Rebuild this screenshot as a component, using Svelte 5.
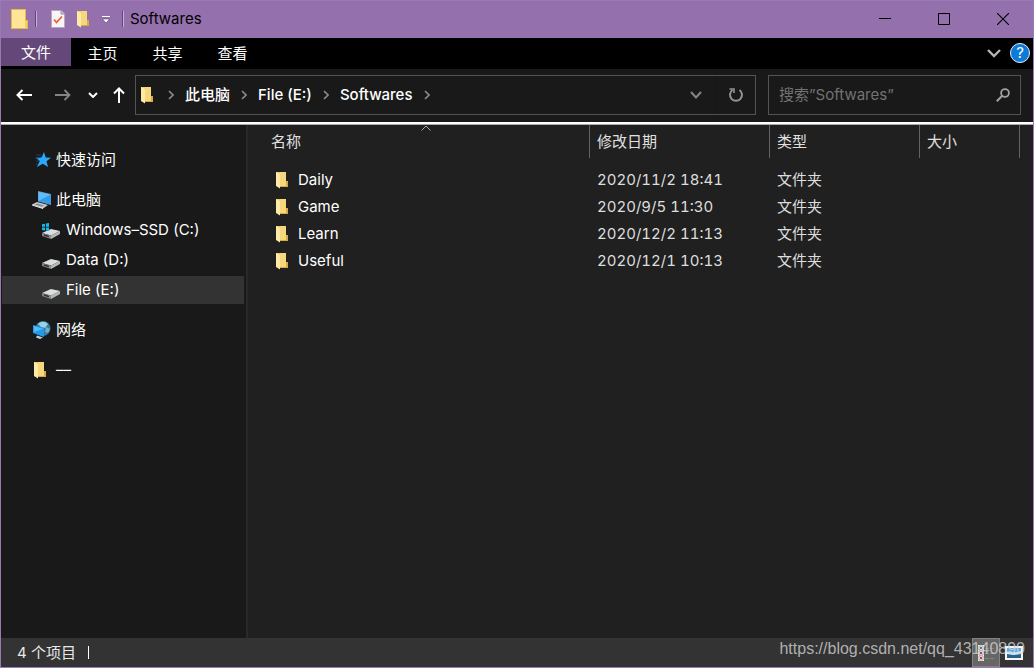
<script>
  let search = $state('');
  let selected = $state('File (E:)');

  const tabs = ['主页', '共享', '查看'];
  const crumbs = ['此电脑', 'File (E:)', 'Softwares'];

  const groups = [
    [{ name: '快速访问', icon: 'star' }],
    [
      { name: '此电脑', icon: 'computer' },
      { name: 'Windows–SSD (C:)', icon: 'system', child: true },
      { name: 'Data (D:)', icon: 'drive', child: true },
      { name: 'File (E:)', icon: 'drive', child: true }
    ],
    [{ name: '网络', icon: 'network' }],
    [{ name: '––', icon: 'folder' }]
  ];

  const files = [
    { name: 'Daily', date: '2020/11/2 18:41' },
    { name: 'Game', date: '2020/9/5 11:30' },
    { name: 'Learn', date: '2020/12/2 11:13' },
    { name: 'Useful', date: '2020/12/1 10:13' }
  ];
</script>

{#snippet folder()}
  <svg class="folder" width="12" height="18" viewBox="0 0 12 18" aria-hidden="true">
    <path d="M0 1H10V10H12V16H3L0 14Z" fill="#f0cb68" />
    <path d="M4 1H10V15H4Z" fill="#f6d77c" />
    <path d="M0 1L4 3V17.5L0 15Z" fill="#ffeaa6" />
    <path d="M10 10H12V16H4V15H10Z" fill="#d5aa4a" />
  </svg>
{/snippet}

{#snippet chevron()}
  <svg class="chevron" width="6" height="10" viewBox="0 0 6 10" aria-hidden="true">
    <path d="M1 1L5 5L1 9" fill="none" stroke="#8c8c8c" stroke-width="1.6" />
  </svg>
{/snippet}

{#snippet treeIcon(kind)}
  {#if kind === 'star'}
    <svg width="20" height="18" viewBox="0 0 20 18" aria-hidden="true">
      <path d="M12 1L13.7 6.5L19 6.8L14.5 10.3L16 16L10.8 12.8L5 16L7.6 10.2L4 6.8L9.5 6.5Z" fill="#2ba8fa" />
      <path d="M4 4H9M3 7H7M4 10H8M4 13H6" stroke="#15547f" stroke-width="0.8" />
    </svg>
  {:else if kind === 'computer'}
    <svg width="20" height="18" viewBox="0 0 20 18" aria-hidden="true">
      <path d="M6 0L19 3V14L6 10.5Z" fill="#7890a2" />
      <path d="M6.5 0.8L18.5 3.6V13.2L6.5 10Z" fill="#2d9df0" />
      <path d="M6.5 0.8L18.5 3.6L6.5 10Z" fill="#62bcfb" />
      <path d="M0 13.5L5 11L16 14L11 17.5Z" fill="#c7ccd0" />
      <path d="M3 13.4L5 12.4L12 14.4L10 15.7Z" fill="#81898f" />
      <path d="M0 13.5L11 17V18L0 14.5Z" fill="#eef0f1" />
    </svg>
  {:else if kind === 'system' || kind === 'drive'}
    <svg width="20" height="18" viewBox="0 0 20 18" aria-hidden="true">
      <path d="M1 12L10 8L19 10L10 14.5Z" fill="#dcdddf" />
      <path d="M1 12L10 14.5V18L1 15Z" fill="#858585" />
      <path d="M10 14.5L19 10V13L10 18Z" fill="#b7b7b7" />
      <path d="M3 14L8 15.6" stroke="#303030" stroke-width="1.4" />
      <path d="M8 16H9" stroke="#53e275" />
      {#if kind === 'system'}
        <path d="M1 3.2L4 2.7V5.7H1ZM5 2.5L8 2V5.7H5ZM1 6.5H4V9.5L1 9ZM5 6.5H8V10L5 9.6Z" fill="#14b8f0" />
      {/if}
    </svg>
  {:else if kind === 'network'}
    <svg width="20" height="18" viewBox="0 0 20 18" aria-hidden="true">
      <circle cx="11" cy="7.5" r="7.5" fill="#347c9e" />
      <path d="M6 3C9 0 13 0 16 3L13 7L9 6Z" fill="#9bd0e4" />
      <path d="M14 6L18 8L16 12L13 11Z" fill="#73adc9" />
      <path d="M1 4L12 7V16L1 12Z" fill="#239bed" />
      <path d="M2 5L11 7.7L2 11Z" fill="#56b9fb" />
      <path d="M5 14.5L11 16.5L8 18L4 16.5Z" fill="#c5cdd2" />
    </svg>
  {:else}
    {@render folder()}
  {/if}
{/snippet}

<div class="window">
  <header class="titlebar">
    <svg class="app-icon" width="18" height="20" viewBox="0 0 18 20" aria-hidden="true">
      <path d="M0 0H15V11H17V20H0Z" fill="#e2bb4f" />
      <path d="M1 1H14V19H1Z" fill="#ffe594" />
      <path d="M14 12H16V19H14Z" fill="#f5cf69" />
    </svg>
    <span class="divider"></span>
    <button class="quick check" aria-label="属性">
      <svg width="14" height="18" viewBox="0 0 14 18">
        <path d="M0.5 0.5H10L13.5 4V17.5H0.5Z" fill="#f7f5f8" stroke="#b5aabc" />
        <path d="M10 0.5V4H13.5" fill="#d3cbd8" stroke="#9a8aa5" />
        <path d="M3 9.5L5.5 12.5L11 6.5" fill="none" stroke="#ee5f2c" stroke-width="1.8" />
      </svg>
    </button>
    <button class="quick new" aria-label="新建文件夹">{@render folder()}</button>
    <button class="quick more" aria-label="自定义快速访问工具栏">
      <svg width="8" height="8" viewBox="0 0 8 8">
        <path d="M0 1.5H8" stroke="#fff" />
        <path d="M0.5 4H7.5L4 8Z" fill="#fff" stroke="#4a3855" stroke-width="0.5" />
      </svg>
    </button>
    <span class="divider"></span>
    <span class="title">Softwares</span>
    <div class="controls">
      <button aria-label="最小化">
        <svg width="12" height="12" viewBox="0 0 12 12"><path d="M0 5.5H12" stroke="#000" /></svg>
      </button>
      <button aria-label="最大化">
        <svg width="12" height="12" viewBox="0 0 12 12"><path d="M0.5 0.5H11.5V11.5H0.5Z" fill="none" stroke="#000" /></svg>
      </button>
      <button aria-label="关闭">
        <svg width="12" height="12" viewBox="0 0 12 12"><path d="M0 0L12 12M12 0L0 12" stroke="#000" stroke-width="1.1" /></svg>
      </button>
    </div>
  </header>

  <nav class="ribbon">
    <button class="file-tab">文件</button>
    {#each tabs as tab}
      <button class="tab">{tab}</button>
    {/each}
    <button class="expand" aria-label="展开功能区">
      <svg width="14" height="9" viewBox="0 0 14 9"><path d="M1 1L7 7L13 1" fill="none" stroke="#b4b4b4" stroke-width="2.4" /></svg>
    </button>
    <button class="help" aria-label="帮助">?</button>
  </nav>

  <div class="toolbar">
    <div class="history">
      <button aria-label="后退">
        <svg width="16" height="12" viewBox="0 0 16 12"><path d="M16 6H1.5M6.5 1L1.5 6L6.5 11" fill="none" stroke="#fff" stroke-width="2" /></svg>
      </button>
      <button aria-label="前进">
        <svg width="16" height="12" viewBox="0 0 16 12"><path d="M0 6H14.5M9.5 1L14.5 6L9.5 11" fill="none" stroke="#858585" stroke-width="1.8" /></svg>
      </button>
      <button class="recent" aria-label="最近浏览的位置">
        <svg width="10" height="6" viewBox="0 0 10 6"><path d="M1 1L5 5L9 1" fill="none" stroke="#fff" stroke-width="2" /></svg>
      </button>
      <button class="up" aria-label="上移">
        <svg width="12" height="16" viewBox="0 0 12 16"><path d="M6 16V1.5M1 6.5L6 1.5L11 6.5" fill="none" stroke="#fff" stroke-width="2" /></svg>
      </button>
    </div>
    <div class="address">
      {@render folder()}
      {@render chevron()}
      {#each crumbs as crumb}
        <button class="crumb">{crumb}</button>
        {@render chevron()}
      {/each}
      <button class="drop" aria-label="以前的位置">
        <svg width="12" height="8" viewBox="0 0 12 8"><path d="M1 1L6 6.5L11 1" fill="none" stroke="#858585" stroke-width="2" /></svg>
      </button>
      <button class="refresh" aria-label="刷新">
        <svg width="16" height="16" viewBox="0 0 16 16">
          <path d="M11.5 3A6 6 0 1 1 4.5 3" fill="none" stroke="#929292" stroke-width="2" />
          <path d="M1.5 2H6V6" fill="none" stroke="#929292" stroke-width="1.6" />
        </svg>
      </button>
    </div>
    <label class="search">
      <input type="text" aria-label="搜索" placeholder="搜索”Softwares”" bind:value={search} />
      <svg width="14" height="14" viewBox="0 0 14 14" aria-hidden="true">
        <circle cx="9" cy="5" r="3.9" fill="none" stroke="#a2a2a2" stroke-width="1.8" />
        <path d="M6.2 7.8L0.8 13.2" stroke="#a2a2a2" stroke-width="2" />
      </svg>
    </label>
  </div>

  <div class="content">
    <aside class="sidebar">
      {#each groups as group}
        <div class="group">
          {#each group as item}
            <button
              class="node"
              class:child={item.child}
              class:selected={selected === item.name}
              onclick={() => (selected = item.name)}
            >
              <span class="icon">{@render treeIcon(item.icon)}</span>
              {item.name}
            </button>
          {/each}
        </div>
      {/each}
    </aside>

    <main class="files">
      <svg class="sort" width="10" height="6" viewBox="0 0 10 6" aria-hidden="true">
        <path d="M0.5 5.5L5 1L9.5 5.5" fill="none" stroke="#a8a8a8" />
      </svg>
      <table>
        <colgroup>
          <col />
          <col class="col-date" />
          <col class="col-type" />
          <col class="col-size" />
        </colgroup>
        <thead>
          <tr><th>名称</th><th>修改日期</th><th>类型</th><th>大小</th></tr>
        </thead>
        <tbody>
          {#each files as file}
            <tr>
              <td><span class="name">{@render folder()}{file.name}</span></td>
              <td>{file.date}</td>
              <td>文件夹</td>
              <td></td>
            </tr>
          {/each}
        </tbody>
      </table>
    </main>
  </div>

  <footer class="statusbar">
    <span class="count">4 个项目</span>
    <span class="bar"></span>
    <div class="views">
      <button class="view active" aria-label="详细信息">
        <svg width="16" height="16" viewBox="0 0 16 16">
          <path d="M0 0H6V16H0Z" fill="#f2f2f2" />
          <path d="M1 1H5V5H1ZM1 6H5V10H1ZM1 11H5V15H1Z" fill="#fff" stroke="#777" stroke-width="0.6" />
          <path d="M2 2H4V4H2Z" fill="#3b78b8" />
          <path d="M2 7H4V9H2ZM2 12H4V14H2Z" fill="#c43a2d" />
          <path d="M7 3.5H11M12 3.5H16M7 8.5H11M12 8.5H16M7 13.5H11M12 13.5H16" stroke="#858585" />
        </svg>
      </button>
      <button class="view" aria-label="大图标">
        <svg width="18" height="14" viewBox="0 0 18 14">
          <path d="M0 0H18V14H0Z" fill="#f5f5f5" />
          <path d="M2 2H16V12H2Z" fill="#5aa9e6" />
          <path d="M2 6C6 4 8 8 16 5V9H2Z" fill="#d4ecfa" />
          <path d="M2 8L8 9L16 8V12H2Z" fill="#28638c" />
        </svg>
      </button>
    </div>
    <span class="watermark">https://blog.csdn.net/qq_43140890</span>
  </footer>
</div>

<style>
  :global(body) {
    margin: 0;
    background: #202020;
  }

  .window {
    display: flex;
    flex-direction: column;
    box-sizing: border-box;
    min-height: 100vh;
    border: 1px solid #9b7ab3;
    background: #191919;
    color: #fff;
    font-family: Inter, 'Noto Sans CJK SC', sans-serif;
    font-size: 15px;
    line-height: 20px;
  }

  button {
    display: flex;
    align-items: center;
    justify-content: center;
    padding: 0;
    border: 0;
    background: none;
    color: inherit;
    font: inherit;
  }

  svg {
    display: block;
    flex: none;
  }

  /* Title bar */
  .titlebar {
    display: flex;
    align-items: center;
    box-sizing: border-box;
    height: 37px;
    padding: 0 1px 1px 10px;
    background: #9471ad;
    color: #000;
  }

  .divider {
    width: 1px;
    height: 16px;
    border-right: 1px solid #c5b3d1;
    background: #604873;
  }

  .app-icon {
    margin-right: 6px;
  }

  .check {
    margin: 0 12px 0 14px;
  }

  .more {
    margin: 0 12px 0 13px;
  }

  .title {
    margin-left: 6px;
  }

  .controls {
    display: flex;
    align-self: stretch;
    margin-left: auto;
  }

  .controls button {
    width: 59px;
  }

  /* Ribbon tabs */
  .ribbon {
    display: flex;
    align-items: flex-start;
    height: 31px;
    background: #000;
  }

  .file-tab {
    width: 70px;
    height: 28px;
    padding-top: 2px;
    background: #64487a;
  }

  .tab {
    width: 65px;
    height: 31px;
    padding-right: 2px;
  }

  .expand {
    height: 30px;
    margin-left: auto;
  }

  .help {
    box-sizing: border-box;
    width: 20px;
    height: 20px;
    margin: 5px 3px 0 9px;
    border: 1px solid #e4f1fb;
    border-radius: 50%;
    background: #0b7ad8;
  }

  /* Navigation row */
  .toolbar {
    display: flex;
    align-items: center;
    box-sizing: border-box;
    height: 55px;
    padding-bottom: 1px;
    border-bottom: 2px solid #fff;
    box-shadow: 0 1px #a8aaa8;
  }

  .history {
    display: flex;
    align-items: center;
    padding: 0 10px 0 15px;
  }

  .history button {
    height: 30px;
    margin-right: 23px;
  }

  .history .recent {
    margin: 0 15px 0 -6px;
  }

  .history .up {
    margin-right: 0;
  }

  .address,
  .search {
    display: flex;
    align-items: center;
    box-sizing: border-box;
    height: 40px;
    border: 1px solid #535353;
  }

  .address {
    flex: 1;
    padding-left: 5px;
  }

  .address > .chevron {
    margin: 0 11px;
  }

  .address .folder + .chevron {
    margin: 0 11px 0 15px;
  }

  .crumb {
    font-weight: 500;
  }

  .drop {
    width: 38px;
    height: 38px;
    margin-left: auto;
  }

  .refresh {
    width: 40px;
    height: 38px;
    border-left: 1px solid #161616;
  }

  .search {
    width: 253px;
    margin: 0 12px;
    padding: 0 10px;
  }

  .search input {
    flex: 1;
    min-width: 0;
    padding: 0;
    border: 0;
    outline: 0;
    background: none;
    color: #fff;
    font: inherit;
  }

  .search input::placeholder {
    color: #727272;
    opacity: 1;
  }

  /* Tree and file list */
  .content {
    display: flex;
    flex: 1;
    margin-top: 1px;
  }

  .sidebar {
    box-sizing: border-box;
    width: 247px;
    padding: 21px 2px 0 1px;
    border-right: 2px solid #292929;
  }

  .group {
    display: flex;
    flex-direction: column;
    gap: 2px;
    margin-bottom: 12px;
  }

  .node {
    justify-content: flex-start;
    height: 28px;
    padding-left: 30px;
  }

  .node.child {
    padding-left: 39px;
  }

  .node.selected {
    background: #333;
  }

  .icon {
    display: flex;
    width: 20px;
    margin-right: 4px;
  }

  .icon .folder {
    margin-left: 2px;
  }

  .child .icon {
    margin-right: 5px;
  }

  .files {
    position: relative;
    flex: 1;
    padding-right: 13px;
    background: #202020;
  }

  .sort {
    position: absolute;
    top: 0;
    left: 173px;
  }

  table {
    width: 100%;
    border-collapse: separate;
    border-spacing: 0;
    table-layout: fixed;
    font-variant-numeric: tabular-nums;
  }

  .col-date {
    width: 180px;
  }

  .col-type {
    width: 150px;
  }

  .col-size {
    width: 100px;
  }

  th {
    box-sizing: border-box;
    height: 33px;
    padding: 0 7px;
    border-right: 1px solid #636363;
    color: #e0e0e0;
    font-weight: 400;
    text-align: left;
  }

  th:first-child {
    padding-left: 23px;
  }

  tbody::before {
    content: '';
    display: block;
    height: 8px;
  }

  td {
    height: 27px;
    padding: 0 7px;
    color: #dedede;
  }

  td:first-child {
    padding-left: 28px;
    color: #fff;
  }

  .name {
    display: flex;
    align-items: center;
    gap: 10px;
  }

  /* Status bar */
  .statusbar {
    position: relative;
    display: flex;
    align-items: center;
    height: 29px;
    padding-left: 16px;
    background: #333;
    color: #e8e8e8;
  }

  .bar {
    width: 1px;
    height: 13px;
    margin-left: 12px;
    background: #fff;
  }

  .views {
    display: flex;
    align-self: stretch;
    margin-left: auto;
    padding-right: 5px;
  }

  .view {
    box-sizing: border-box;
    width: 28px;
    border: 1px solid transparent;
  }

  .view.active {
    border-color: #838383;
    background: #666;
  }

  .watermark {
    position: absolute;
    right: 8px;
    bottom: 8px;
    color: rgba(210, 210, 210, 0.8);
    font-family: 'Liberation Sans', Arial, sans-serif;
    font-size: 16px;
    pointer-events: none;
  }
</style>
